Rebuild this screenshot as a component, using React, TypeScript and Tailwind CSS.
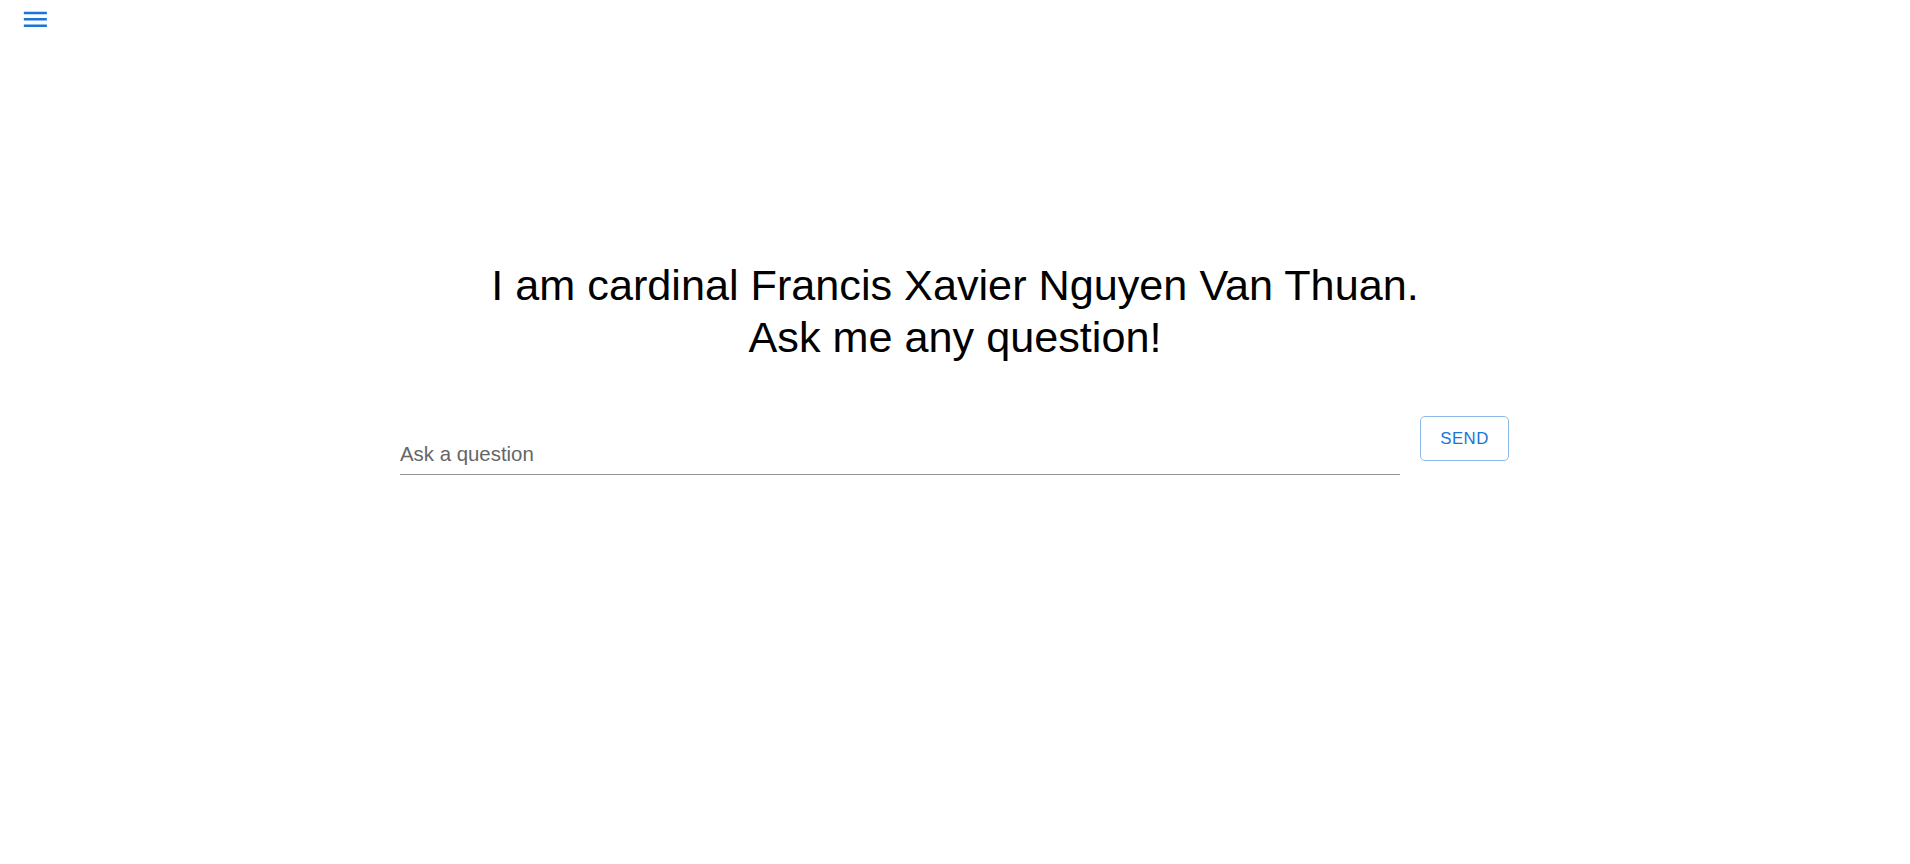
import { useState } from "react"

function MenuIcon() {
  return (
    <svg viewBox="0 0 24 24" className="w-[30.7px] h-[30.7px]" fill="#1976d2" aria-hidden="true">
      <path d="M3 18h18v-2H3zm0-5h18v-2H3zm0-7v2h18V6z" />
    </svg>
  )
}

export default function App() {
  const [question, setQuestion] = useState("")

  return (
    <div className="min-h-[864px] bg-white font-['Liberation_Sans',Arial,sans-serif]">
      <div className="h-[40px] pl-[19.5px] pt-[4.3px]">
        <button type="button" className="block">
          <MenuIcon />
        </button>
      </div>

      <h1 className="mt-[220px] text-center text-[43.2px] leading-[1.2] font-normal text-black">
        I am cardinal Francis Xavier Nguyen Van Thuan.
        <br />
        Ask me any question!
      </h1>

      <div className="mx-auto mt-[52px] flex w-[1110px] items-start gap-5">
        <div className="w-[1000px] pt-[24px]">
          <input
            value={question}
            onChange={(e) => setQuestion(e.target.value)}
            placeholder="Ask a question"
            className="block w-full h-[35px] pb-[5px] border-b border-[#949494] text-[20.4px] text-black placeholder:text-[#666666] outline-none"
          />
        </div>
        <button
          type="button"
          className="w-[89px] h-[45px] rounded-[5px] border border-[#8cbbe9] text-[16.8px] tracking-[0.48px] text-[#1976d2] uppercase"
        >
          Send
        </button>
      </div>
    </div>
  )
}
